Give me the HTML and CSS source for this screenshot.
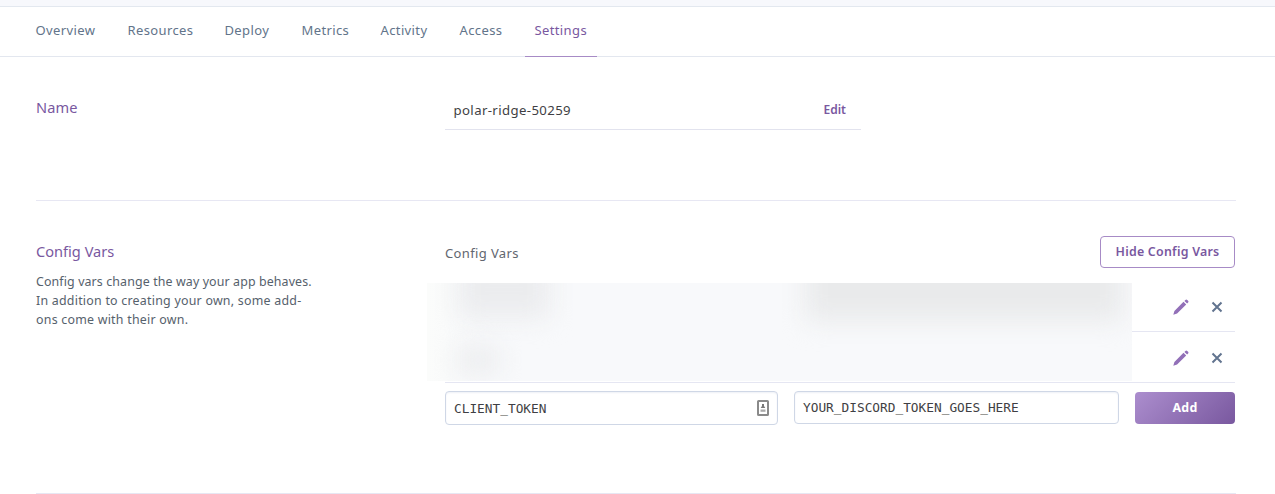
FILE: index.html
```
<!DOCTYPE html>
<html lang="en">
<head>
<meta charset="utf-8">
<title>Settings</title>
<link rel="stylesheet" href="styles.css">
</head>
<body>
<div class="topbar"></div>
<nav class="tabs">
  <a class="tab t-overview">Overview</a>
  <a class="tab t-resources">Resources</a>
  <a class="tab t-deploy">Deploy</a>
  <a class="tab t-metrics">Metrics</a>
  <a class="tab t-activity">Activity</a>
  <a class="tab t-access">Access</a>
  <a class="tab t-settings active">Settings</a>
</nav>
<main class="page">
  <section class="row name-row">
    <h2 class="heading">Name</h2>
    <div class="name-field">
      <span class="app-name">polar-ridge-50259</span>
      <a class="edit">Edit</a>
    </div>
  </section>
  <section class="row config-row">
    <div class="side">
      <h2 class="heading heading-config">Config Vars</h2>
      <p class="desc">Config vars change the way your app behaves.<br><span class="desc-wide">In addition to creating your own, some add-<br>ons come with their own.</span></p>
    </div>
    <div class="config">
      <div class="config-head">
        <span class="config-title">Config Vars</span>
        <button class="btn-outline">Hide Config Vars</button>
      </div>
      <div class="vars">
        <div class="var">
          <svg class="pencil" viewBox="0 0 16 16"><path d="M.3 15.7 1.4 11.9 10.5 2.8l2.7 2.7-9.1 9.1zM11.4 1.9l1-1q.9-.8 1.8 0l.9.9q.9.9 0 1.8l-1 1z"/></svg>
          <svg class="cross" viewBox="0 0 12 12"><path d="M1.5 1.5l9 9M10.5 1.5l-9 9"/></svg>
        </div>
        <div class="var">
          <svg class="pencil" viewBox="0 0 16 16"><path d="M.3 15.7 1.4 11.9 10.5 2.8l2.7 2.7-9.1 9.1zM11.4 1.9l1-1q.9-.8 1.8 0l.9.9q.9.9 0 1.8l-1 1z"/></svg>
          <svg class="cross" viewBox="0 0 12 12"><path d="M1.5 1.5l9 9M10.5 1.5l-9 9"/></svg>
        </div>
        <div class="redacted">
          <i class="smudge smudge-key"></i>
          <i class="smudge smudge-key2"></i>
          <i class="smudge smudge-value"></i>
        </div>
      </div>
      <div class="add-row">
        <div class="input input-key">
          <span>CLIENT_TOKEN</span>
          <svg class="autofill" viewBox="0 0 12 16"><rect x="1" y="1" width="10" height="14" rx=".6" fill="#fff" stroke="#8a8a8a" stroke-width="2"/><path d="M5 4h2v2l1.3 2H3.7L5 6z" fill="#777"/><path d="M3.5 9.5h5v2.3h-5z" fill="#aaa"/></svg>
        </div>
        <div class="input input-value"><span>YOUR_DISCORD_TOKEN_GOES_HERE</span></div>
        <button class="btn-add">Add</button>
      </div>
    </div>
  </section>
</main>
</body>
</html>
```
FILE: styles.css
```
* { box-sizing: border-box; }
body { margin: 0; background: #fff; font-family: "Noto Sans", "Open Sans", sans-serif; color: #3f3f44; overflow: hidden; }
.topbar { height: 7px; background: #f7f8fc; border-bottom: 1px solid #e3e8ef; }
.tabs { display: flex; gap: 11px; height: 50px; padding-left: 26px; border-bottom: 1px solid #e3e7ef; }
.tab { height: 50px; padding: 0 9.5px; font-size: 13px; letter-spacing: .38px; line-height: 47px; color: #62748a; white-space: nowrap; }
.t-overview { width: 81px; }
.t-resources { width: 86px; }
.t-deploy { width: 66px; }
.t-metrics { width: 68px; }
.t-activity { width: 68px; }
.t-access { width: 64px; }
.t-settings { width: 72px; }
.tab.active { color: #79589f; border-bottom: 1px solid #a78bc6; }
.page { padding: 0 39px 0 36px; }
.row { display: flex; border-bottom: 1px solid #e7e7f3; }
.name-row { height: 144px; padding-top: 34px; }
.config-row { height: 293px; padding-top: 35px; }
.heading { width: 409px; margin: 0; padding-top: 5px; font-size: 14.6px; letter-spacing: .15px; line-height: 22px; font-weight: 400; color: #79589f; }
.heading-config { padding-top: 4px; letter-spacing: 0; }
.name-field { display: flex; justify-content: space-between; width: 416px; height: 39px; padding: 0 15px 0 8.5px; border-bottom: 1px solid #e2e3ee; line-height: 38px; }
.app-name { font-size: 13.2px; letter-spacing: .38px; }
.edit { font-size: 12px; font-weight: 600; color: #79589f; }
.side { width: 409px; }
.desc { margin: 10px 0 0; font-size: 12.4px; letter-spacing: .12px; line-height: 19px; color: #56616c; white-space: nowrap; }
.desc-wide { letter-spacing: .24px; }
.config { width: 790px; }
.config-head { display: flex; justify-content: space-between; height: 45px; }
.config-title { font-size: 13px; letter-spacing: .37px; line-height: 34px; color: #62666f; }
.btn-outline { width: 135px; height: 32px; padding: 0 0 2px; border: 1px solid #a78bc6; border-radius: 4px; background: #fff; font: 600 12.4px "Noto Sans", sans-serif; letter-spacing: .25px; color: #79589f; white-space: nowrap; }
.vars { position: relative; height: 102px; }
.var { display: flex; justify-content: flex-end; align-items: center; height: 51px; padding: 2px 12px 0 0; gap: 22px; border-bottom: 1px solid #e5e6f2; }
.pencil { width: 16px; height: 16px; fill: #9270b8; }
.cross { width: 12px; height: 12px; fill: none; stroke: #62748f; stroke-width: 2; }
.redacted { position: absolute; left: -18px; top: 2px; width: 705px; height: 98px; overflow: hidden; background: linear-gradient(90deg, #fbfcfb, #f8f9fb 8%, #f8f9fb); }
.smudge { position: absolute; background: #e9eaeb; filter: blur(13px); }
.smudge-key { left: 31px; top: -22px; width: 92px; height: 57px; background: #ebecee; }
.smudge-key2 { left: 30px; top: 64px; width: 42px; height: 26px; background: #ebecee; }
.smudge-value { left: 378px; top: -28px; width: 318px; height: 66px; }
.add-row { display: flex; align-items: flex-start; padding-top: 8px; }
.input { display: flex; align-items: center; justify-content: space-between; padding: 0 8px; border: 1px solid #cfd7e6; border-radius: 4px; box-shadow: inset 0 1px 2px #eef0f6; font: 12.8px "DejaVu Sans Mono", monospace; color: #3f3f44; }
.input-key { width: 333px; height: 34px; margin-right: 16px; }
.input-value { width: 325px; height: 33px; margin-right: 16px; }
.autofill { width: 12px; height: 16px; }
.btn-add { width: 100px; height: 32px; margin-top: 1px; padding: 0 0 1px; border: 0; border-radius: 4px; background: linear-gradient(135deg, #ac8ece, #79589f); font: 700 12.4px "Noto Sans", sans-serif; letter-spacing: .2px; color: #fff; }
```
